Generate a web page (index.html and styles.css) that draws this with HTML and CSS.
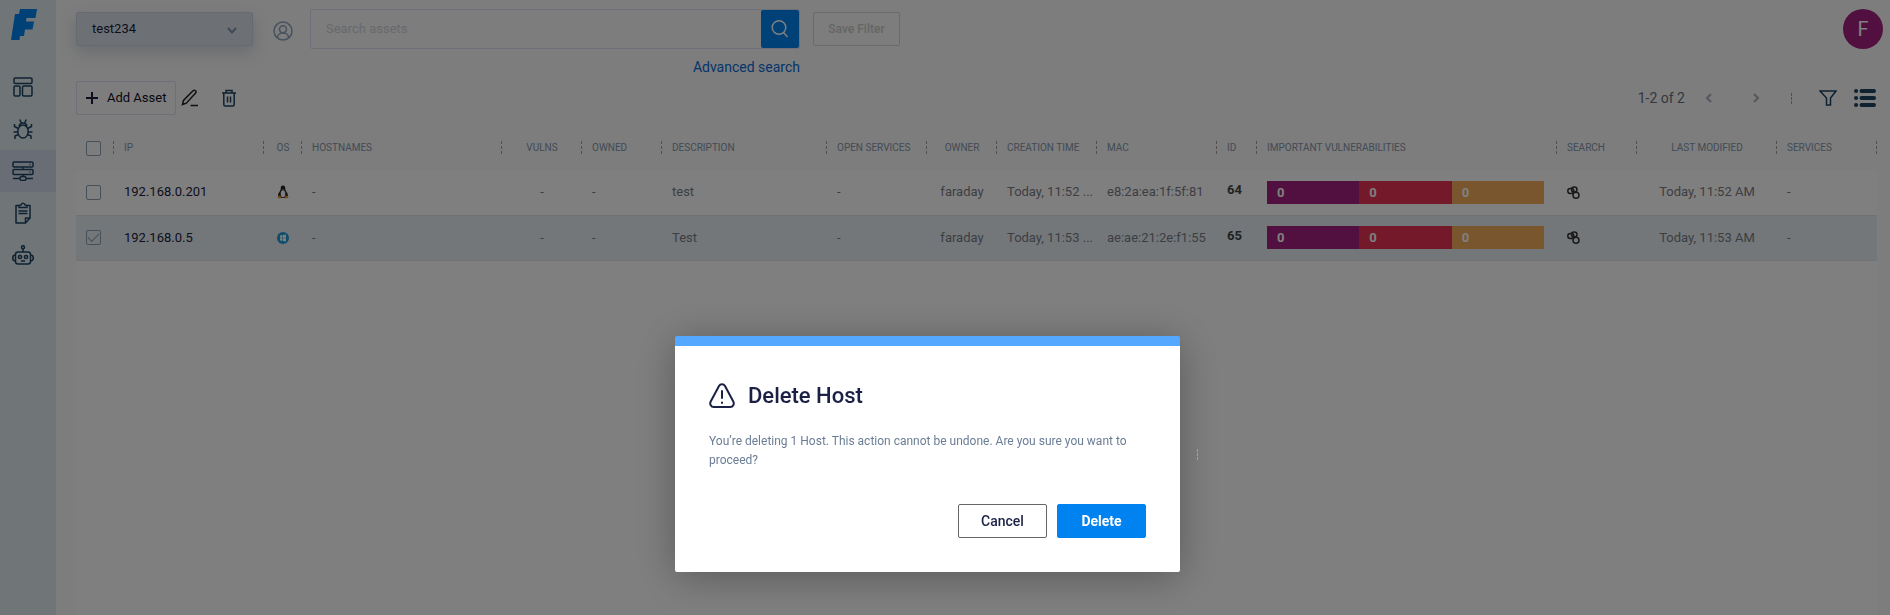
FILE: index.html
```html
<!DOCTYPE html>
<html lang="en">
<head>
<meta charset="utf-8">
<title>Assets</title>
<link rel="stylesheet" href="styles.css">
</head>
<body>
<div class="app">
  <nav class="sidebar" aria-label="Main">
    <a class="logo" href="#" aria-label="Home">
      <svg width="28" height="32" viewBox="0 0 28 32"><path fill="#0082f0" d="M9 0H26L24.500 9H15.500L15 12.500H23L21.500 20.500H14L13 27H9L8.500 31H0L4 5H8Z"/></svg>
    </a>
    <a class="nav-item" href="#" aria-label="Dashboard">
      <svg width="20" height="20" viewBox="0 0 20 20"><rect x="1" y="1" width="18" height="5.500" rx="1.200"/><rect x="1" y="9" width="6" height="10" rx="1.200"/><rect x="9.500" y="9" width="9.500" height="10" rx="1.200"/></svg>
    </a>
    <a class="nav-item" href="#" aria-label="Vulnerabilities">
      <svg width="20" height="20" viewBox="0 0 20 20"><ellipse cx="10" cy="12.500" rx="5.200" ry="6.500"/><path d="M6 7.500C6.500 5 8 4 10 4s3.500 1 4 3.500M6.800 0.500 8.300 4M13.200 0.500 11.700 4M1.500 5v2.500l4 2M18.500 5v2.500l-4 2M0.500 13H5M15 13h4.500M5.500 15.500l-3.500 1.500v3M14.500 15.500l3.500 1.500v3"/></svg>
    </a>
    <a class="nav-item active" href="#" aria-label="Assets">
      <svg width="22" height="20" viewBox="0 0 22 20"><rect x="1" y="1" width="20" height="5" rx="1"/><rect x="1" y="8.500" width="20" height="5" rx="1"/><path d="M17.500 3.500h1M17.500 11h1M11 6v2.500M11 13.500v2M1 17.500h6.500M14.500 17.500H21M9 15.500h4l1.500 2-1.500 2H9l-1.500-2z"/></svg>
    </a>
    <a class="nav-item" href="#" aria-label="Reports">
      <svg width="16" height="22" viewBox="0 0 16 22"><path d="M4 3.500H1V21h9.500l4.500-5V3.500h-3M4 5.500V3.500l2-.5c.3-2.500 3.700-2.500 4 0l2 .5v2zM10.500 21v-5H15M3.500 9h9M3.500 11.500h9"/></svg>
    </a>
    <a class="nav-item" href="#" aria-label="Agents">
      <svg width="22" height="20" viewBox="0 0 22 20"><circle cx="11" cy="2.200" r="1.500"/><path d="M11 4v3M3.500 10C-.2 10 -.2 16 3.500 16M18.500 10c3.700 0 3.700 6 0 6M9 16h4"/><rect x="3.500" y="7" width="15" height="12" rx="2.500"/><circle cx="8" cy="12" r="1.600"/><circle cx="14" cy="12" r="1.600"/></svg>
    </a>
  </nav>

  <main class="main">
    <header class="topbar">
      <div class="workspace">
        <select class="workspace-select" aria-label="Workspace"><option>test234</option></select>
        <svg class="workspace-arrow" width="10" height="7" viewBox="0 0 10 7"><path d="M1 1l4 4.500L9 1"/></svg>
      </div>
      <button class="icon-button user" aria-label="My items">
        <svg width="20" height="20" viewBox="0 0 20 20"><circle cx="10" cy="10" r="9"/><circle cx="10" cy="8.200" r="3.500"/><path d="M4.500 16.500c0-6 11-6 11 0"/></svg>
      </button>
      <div class="search">
        <div class="search-box">
          <input class="search-input" type="text" placeholder="Search assets" aria-label="Search assets">
          <button class="search-button" aria-label="Search">
            <svg width="18" height="20" viewBox="0 0 18 20"><circle cx="8" cy="8.500" r="6.800"/><path d="M12.500 13.500L16.500 18"/></svg>
          </button>
        </div>
        <a class="advanced" href="#">Advanced search</a>
      </div>
      <button class="save-filter">Save Filter</button>
      <button class="avatar" aria-label="Account">F</button>
    </header>

    <div class="toolbar">
      <button class="add-asset">
        <svg width="12" height="12" viewBox="0 0 12 12"><path d="M6 0v12M0 6h12"/></svg>
        Add Asset
      </button>
      <button class="icon-button edit" aria-label="Edit">
        <svg width="18" height="18" viewBox="0 0 18 18"><path d="M1.500 15.500l1-4L12 1.800c1.700-1.500 4 .5 2.600 2.300L5.300 14.200zM9.500 16.500H17"/></svg>
      </button>
      <button class="icon-button trash" aria-label="Delete">
        <svg width="16" height="18" viewBox="0 0 16 18"><path d="M1 4h14M5 4V1.500h6V4M2.800 4v11.500c0 1 .5 1.500 1.500 1.500h7.400c1 0 1.500-.5 1.500-1.500V4M6.500 7.500v6M9.500 7.500v6"/></svg>
      </button>
      <div class="pager">
        <span class="range">1-2 of 2</span>
        <button class="icon-button page" aria-label="Previous page"><svg width="8" height="10" viewBox="0 0 8 10"><path d="M6 1L2 5l4 4"/></svg></button>
        <button class="icon-button page" aria-label="Next page"><svg width="8" height="10" viewBox="0 0 8 10"><path d="M2 1l4 4-4 4"/></svg></button>
        <span class="divider"></span>
        <button class="icon-button filter" aria-label="Filter"><svg width="18" height="16" viewBox="0 0 18 16"><path d="M1 1h16l-5.500 7v7h-4V8z"/></svg></button>
        <button class="icon-button list" aria-label="Columns"><svg width="22" height="18" viewBox="0 0 22 18"><path d="M2 2h.1M2 9h.1M2 16h.1M7.500 2h12.500M7.500 9h12.500M7.500 16h12.500"/></svg></button>
      </div>
    </div>

    <div class="table-area">
      <table class="assets">
        <colgroup>
          <col class="c-check"><col class="c-ip"><col class="c-os"><col class="c-host"><col class="c-80"><col class="c-80"><col class="c-desc"><col class="c-100"><col class="c-owner"><col class="c-100"><col class="c-mac"><col class="c-id"><col class="c-vulns"><col class="c-80"><col class="c-mod"><col class="c-100">
        </colgroup>
        <thead>
          <tr>
            <th><input class="check" type="checkbox" aria-label="Select all"></th>
            <th>IP</th><th class="center">OS</th><th>HOSTNAMES</th><th class="center">VULNS</th><th>OWNED</th><th>DESCRIPTION</th><th>OPEN SERVICES</th><th class="center">OWNER</th><th>CREATION TIME</th><th>MAC</th><th>ID</th><th>IMPORTANT VULNERABILITIES</th><th>SEARCH</th><th class="center">LAST MODIFIED</th><th>SERVICES</th>
          </tr>
        </thead>
        <tbody>
          <tr>
            <td><input class="check" type="checkbox" aria-label="Select 192.168.0.201"></td>
            <td class="ip">192.168.0.201</td>
            <td class="center"><svg width="12" height="14" viewBox="0 0 12 14"><path fill="#222" d="M6 .5c2 0 2.300 1.500 2.300 3.500S11 7.500 11 11l-1.500 2h-7L1 11c0-3.500 2.700-5 2.700-7S4 .5 6 .5z"/><ellipse cx="6" cy="8.700" rx="2.300" ry="3.500" fill="#fff"/><path d="M1 11l2-.5 1.500 2-1.500 1-2.500-.8zM11 11l-2-.5-1.500 2 1.500 1 2.500-.8zM5 4h2l-1 1.200z" fill="#e99a2c"/></svg></td>
            <td>-</td><td class="center">-</td><td>-</td><td>test</td><td>-</td><td class="center">faraday</td><td>Today, 11:52 ...</td><td>e8:2a:ea:1f:5f:81</td><td class="id">64</td>
            <td><div class="severity"><span class="critical">0</span><span class="high">0</span><span class="medium">0</span></div></td>
            <td><svg class="links" width="13" height="13" viewBox="0 0 13 13"><rect x="0.800" y="2.600" width="6" height="5" rx="2.500"/><rect x="4.500" y="1" width="5.500" height="5" rx="2.500"/><circle cx="9" cy="9.200" r="3"/></svg></td>
            <td class="center">Today, 11:52 AM</td><td>-</td>
          </tr>
          <tr class="selected">
            <td><input class="check" type="checkbox" checked aria-label="Select 192.168.0.5"></td>
            <td class="ip">192.168.0.5</td>
            <td class="center"><svg width="12" height="12" viewBox="0 0 12 12"><circle cx="6" cy="6" r="6" fill="#1f9bd8"/><path fill="#fff" d="M3 3.500l2.500-.4v2.600H3zM6 3l3-.5v3.200H6zM3 6.200h2.500v2.600L3 8.400zM6 6.200h3v3.200L6 8.900z"/></svg></td>
            <td>-</td><td class="center">-</td><td>-</td><td>Test</td><td>-</td><td class="center">faraday</td><td>Today, 11:53 ...</td><td>ae:ae:21:2e:f1:55</td><td class="id">65</td>
            <td><div class="severity"><span class="critical">0</span><span class="high">0</span><span class="medium">0</span></div></td>
            <td><svg class="links" width="13" height="13" viewBox="0 0 13 13"><rect x="0.800" y="2.600" width="6" height="5" rx="2.500"/><rect x="4.500" y="1" width="5.500" height="5" rx="2.500"/><circle cx="9" cy="9.200" r="3"/></svg></td>
            <td class="center">Today, 11:53 AM</td><td>-</td>
          </tr>
        </tbody>
      </table>
    </div>
  </main>
</div>

<div class="overlay">
  <section class="dialog" role="dialog" aria-modal="true" aria-labelledby="dialog-title">
    <h2 class="dialog-title" id="dialog-title">
      <svg width="26" height="26" viewBox="0 0 26 26"><path d="M10 3c1.300-2.500 4.700-2.500 6 0l8.300 15.500c1.300 2.500-.3 5.500-3 5.500H4.700c-2.700 0-4.300-3-3-5.500zM13 8v7M13 19.500v.5"/></svg>
      Delete Host
    </h2>
    <p class="dialog-text">You’re deleting 1 Host. This action cannot be undone. Are you sure you want to proceed?</p>
    <div class="dialog-actions">
      <button class="button cancel">Cancel</button>
      <button class="button delete">Delete</button>
    </div>
  </section>
  <span class="divider handle"></span>
</div>
</body>
</html>
```
FILE: styles.css
```css
* { box-sizing: border-box; }

body {
  margin: 0;
  background: #fafafa;
  color: #7a7d85;
  font: 13px/20px Roboto, "Liberation Sans", sans-serif;
}

button, input, select { font: inherit; }
button { padding: 0; cursor: pointer; }
a { text-decoration: none; }
svg { display: block; fill: none; }

.app { display: flex; min-height: 100vh; }

/* Sidebar */
.sidebar {
  flex: none;
  width: 56px;
  background: #e1eaf0;
}
.logo { display: block; height: 66px; padding: 9px 11px; }
.nav-item {
  display: flex;
  align-items: center;
  justify-content: center;
  height: 42px;
  padding-right: 11px;
  stroke: #1f4463;
  stroke-width: 1.500;
  stroke-linejoin: round;
}
.nav-item.active { background: #d3dbea; }

/* Top bar */
.main {
  flex: 1;
  min-width: 0;
  display: flex;
  flex-direction: column;
  padding: 9px 13px 0 20px;
}
.topbar { display: flex; align-items: flex-start; height: 72px; margin-right: -6px; }
.workspace { position: relative; width: 177px; margin-top: 3px; }
.workspace-select {
  appearance: none;
  display: block;
  width: 100%;
  height: 34px;
  padding: 0 15px;
  border: 1px solid #ced5e5;
  border-radius: 2px;
  background: #dbe3ec;
  box-shadow: 0 6px 16px rgba(120, 135, 160, 0.3);
  color: #1c1c3c;
}
.workspace-arrow {
  position: absolute;
  right: 16px;
  top: 15px;
  stroke: #7f93aa;
  stroke-width: 2;
  pointer-events: none;
}
.icon-button {
  display: flex;
  align-items: center;
  justify-content: center;
  border: 0;
  background: none;
}
.user { width: 20px; height: 20px; margin: 12px 17px 0 20px; stroke: #8fa4bb; stroke-width: 1.500; }
.search { display: flex; flex-direction: column; align-items: flex-end; gap: 8px; width: 490px; }
.search-box {
  display: flex;
  width: 100%;
  height: 40px;
  border: 1px solid #dde1ee;
  border-radius: 2px;
}
.search-input {
  flex: 1;
  min-width: 0;
  padding: 0 15px;
  border: 0;
  outline: 0;
  background: none;
}
.search-input::placeholder { color: #d0d3d9; opacity: 1; }
.search-button {
  display: flex;
  align-items: center;
  justify-content: center;
  width: 38px;
  border: 0;
  border-radius: 2px;
  background: #0082f0;
  stroke: #fff;
  stroke-width: 1.500;
}
.advanced { color: #0b6ad6; font-size: 14px; }
.save-filter {
  width: 87px;
  height: 34px;
  margin: 3px 0 0 13px;
  border: 1px solid #d4d4d4;
  border-radius: 2px;
  background: none;
  color: #cbcbcb;
  font-weight: 500;
  font-size: 12px;
}
.avatar {
  width: 40px;
  height: 40px;
  margin-left: auto;
  border: 0;
  border-radius: 50%;
  background: #a3207e;
  color: #fff;
  font-size: 20px;
}

/* Toolbar */
.toolbar { display: flex; align-items: center; height: 34px; }
.add-asset {
  display: flex;
  align-items: center;
  gap: 9px;
  height: 34px;
  padding: 0 9px;
  border: 1px solid #dde1ee;
  border-radius: 2px;
  background: none;
  color: #101028;
  stroke: #1c1c3c;
  stroke-width: 2;
}
.edit { margin-left: 5px; stroke: #222; stroke-width: 1.500; }
.trash { margin-left: 22px; stroke: #1f4463; stroke-width: 1.500; }
.pager { display: flex; align-items: center; margin-left: auto; padding-right: 1px; }
.range { font-size: 14px; color: #6a7080; }
.page { margin-left: 20px; stroke: #a9b0ba; stroke-width: 2; }
.page + .page { margin-left: 39px; }
.divider {
  width: 1px;
  height: 11px;
  background: repeating-linear-gradient(#a0a0a0 0 3px, transparent 3px 4px);
}
.pager .divider { margin: 0 27px 0 31px; }
.filter { stroke: #1f4463; stroke-width: 1.500; }
.list { margin-left: 17px; stroke: #1f4463; stroke-width: 4; stroke-linecap: round; }

/* Table */
.table-area {
  flex: 1;
  margin-top: 15px;
  background: #fff;
}
.assets { width: 100%; border-collapse: collapse; table-layout: fixed; }
.c-check { width: 38px; }
.c-ip { width: 150px; }
.c-os { width: 38px; }
.c-host { width: 200px; }
.c-80 { width: 80px; }
.c-100 { width: 100px; }
.c-desc { width: 165px; }
.c-owner { width: 70px; }
.c-mac { width: 120px; }
.c-id { width: 40px; }
.c-vulns { width: 300px; }
.c-mod { width: 140px; }
.assets th, .assets td {
  padding: 0 0 0 10px;
  text-align: left;
  white-space: nowrap;
}
.assets th {
  height: 40px;
  padding-bottom: 4px;
  background:
    repeating-linear-gradient(#a0a0a0 0 3px, transparent 3px 5px) right 11px / 1px 14px no-repeat,
    #fafafa;
  color: #8497ac;
  font-weight: 400;
  font-size: 10px;
}
.assets td { height: 45px; }
.assets tbody tr { border-bottom: 1px solid #e1e7ec; }
.assets .selected { background: #e6eff5; }
.assets th.center, .assets td.center { padding-left: 0; text-align: center; }
.center svg { margin: 0 auto; }
.assets .ip { color: #1c1c3c; }
.assets .id { padding-bottom: 4px; color: #444; font-weight: 700; }
.severity { display: flex; width: 277px; color: #fff; font-weight: 700; }
.severity span { flex: 1; height: 23px; padding-left: 10px; line-height: 23px; }
.critical { background: #a3207e; }
.high { background: #e63255; }
.medium { background: #f2ad5c; }
.links { stroke: #333; stroke-width: 1.500; }
.check {
  appearance: none;
  display: grid;
  place-items: center;
  width: 15px;
  height: 15px;
  margin: 0;
  border: 1px solid #8ca0b6;
  border-radius: 2px;
}
.check:checked::before {
  content: "";
  width: 10px;
  height: 5px;
  margin-bottom: 3px;
  border: solid #8ca0b6;
  border-width: 0 0 1px 1px;
  transform: rotate(-45deg);
}

/* Dialog */
.overlay {
  position: fixed;
  inset: 0;
  display: flex;
  align-items: flex-start;
  justify-content: center;
  gap: 17px;
  padding: 336px 17px 0 0;
  background: rgba(0, 0, 0, 0.5);
}
.dialog {
  width: 505px;
  padding: 34px;
  border-top: 10px solid #54a8ff;
  border-radius: 2px;
  background: #fff;
  box-shadow: 0 5px 40px rgba(0, 0, 0, 0.3);
}
.dialog-title {
  display: flex;
  align-items: center;
  gap: 13px;
  margin: 0 0 20px;
  color: #1b2145;
  stroke: #1b2145;
  stroke-width: 2;
  stroke-linecap: round;
  font-size: 22px;
  font-weight: 500;
  line-height: 32px;
}
.dialog-text {
  margin: 0;
  color: #6b7d95;
  font-size: 12px;
  line-height: 19px;
}
.dialog-actions { display: flex; justify-content: flex-end; gap: 10px; margin-top: 34px; }
.button {
  width: 89px;
  height: 34px;
  border: 1px solid #666;
  border-radius: 2px;
  background: #fff;
  color: #1b2145;
  font-size: 14px;
  font-weight: 500;
}
.button.delete { border-color: #0082f0; background: #0082f0; color: #fff; font-weight: 700; }
.handle { margin-top: 113px; }
```
